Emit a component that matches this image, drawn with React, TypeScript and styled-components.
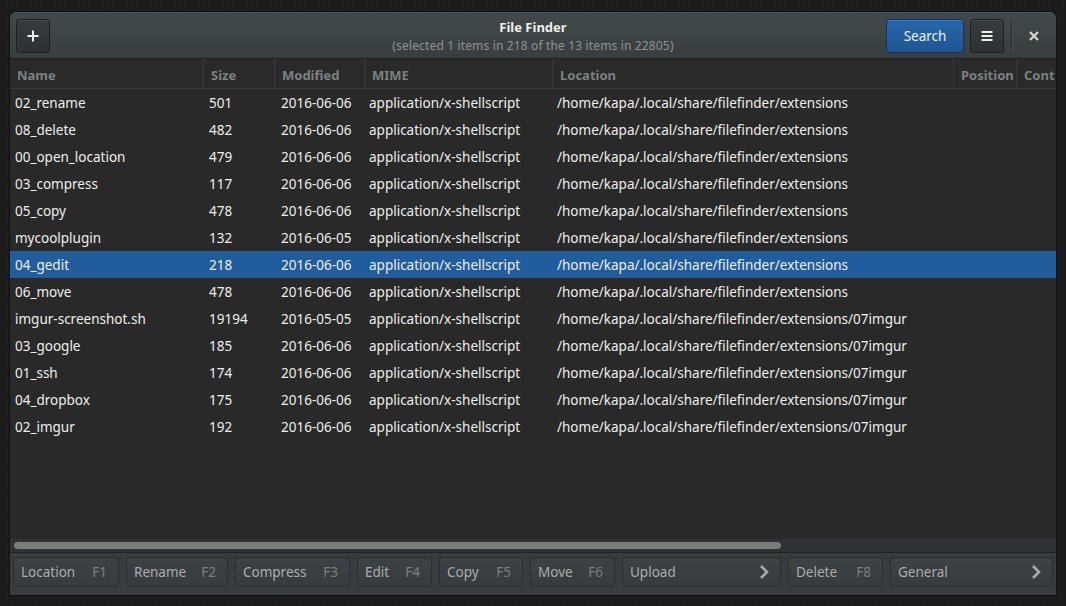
import React from "react";
import styled, { createGlobalStyle } from "styled-components";

const Global = createGlobalStyle`
  html, body { margin: 0; padding: 0; }
  body {
    width: 1066px; height: 606px; overflow: hidden;
    background-color: #1b1b1b;
    background-image: radial-gradient(#242424 1px, transparent 1px);
    background-size: 3px 3px;
    font-family: "Noto Sans", "DejaVu Sans", sans-serif;
  }
`;

const Window = styled.div`
  margin: 12px 0 0 10px;
  width: 1046px;
  height: 583px;
  display: flex;
  flex-direction: column;
  background: #292929;
  border-radius: 6px 6px 0 0;
  overflow: hidden;
  box-shadow: 0 0 0 1px #111;
`;

const HeaderBar = styled.div`
  flex: none;
  display: grid;
  grid-template-columns: 1fr auto 1fr;
  align-items: center;
  padding: 0 6px;
  background: linear-gradient(#41494b, #383e40);
  border-bottom: 1px solid #1e2122;
  border-top: 1px solid #4c5456;
  box-sizing: border-box;
  height: 47px;
`;

const Side = styled.div<{ $end?: boolean }>`
  display: flex;
  align-items: center;
  justify-content: ${(p) => (p.$end ? "flex-end" : "flex-start")};
  gap: 6px;
`;

const ToolButton = styled.button<{ $w: number; $blue?: boolean }>`
  width: ${(p) => p.$w}px;
  height: 34px;
  box-sizing: border-box;
  display: flex;
  align-items: center;
  justify-content: center;
  border-radius: 3px;
  border: 1px solid ${(p) => (p.$blue ? "#12335a" : "#1d2021")};
  background: ${(p) =>
    p.$blue ? "linear-gradient(#2767ad, #1f5591)" : "linear-gradient(#363b3d, #2d3133)"};
  box-shadow: inset 0 1px 0 ${(p) => (p.$blue ? "#3a78bb" : "#414648")};
  color: #eeeeec;
  font: 13.5px "Noto Sans", sans-serif;
  padding: 0;
  flex: none;
`;

const TitleBox = styled.div`
  display: flex;
  flex-direction: column;
  align-items: center;
  justify-content: center;
  padding-top: 1px;
`;

const Title = styled.div`
  font-weight: bold;
  font-size: 13px;
  color: #eeeeec;
  line-height: 17px;
`;

const Subtitle = styled.div`
  font-size: 12px;
  letter-spacing: 0.15px;
  color: #8d9394;
  line-height: 15px;
  margin-top: 2px;
`;

const Sep = styled.div`
  width: 1px;
  height: 34px;
  flex: none;
  background: #2a2f30;
  box-shadow: 1px 0 0 #464d4f;
  margin: 0 0 0 1px;
`;

const CloseBtn = styled.div`
  width: 32px;
  height: 34px;
  flex: none;
  display: flex;
  align-items: center;
  justify-content: center;
`;

const TableArea = styled.div`
  flex: 1;
  display: flex;
  flex-direction: column;
  background: #292929;
  overflow: hidden;
`;

const HeaderRow = styled.div`
  display: flex;
  height: 30px;
  flex: none;
  box-sizing: border-box;
  border-bottom: 1px solid #3a3c3c;
  background: #2a2a2a;
`;

const HeadCell = styled.div<{ $w: number; $last?: boolean }>`
  width: ${(p) => p.$w}px;
  flex: none;
  box-sizing: border-box;
  padding: 2px 0 0 7px;
  display: flex;
  align-items: center;
  font-weight: bold;
  font-size: 13px;
  color: #7d8182;
  border-right: ${(p) => (p.$last ? "none" : "1px solid #3a3c3c")};
  white-space: nowrap;
  overflow: hidden;
`;

const Row = styled.div<{ $sel?: boolean }>`
  display: flex;
  height: 27px;
  flex: none;
  background: ${(p) => (p.$sel ? "#215d9c" : "transparent")};
  color: #eeeeec;
  font-size: 13.5px;
`;

const Cell = styled.div<{ $w: number; $pl?: number }>`
  width: ${(p) => p.$w}px;
  flex: none;
  box-sizing: border-box;
  padding-left: ${(p) => p.$pl ?? 5}px;
  display: flex;
  align-items: center;
  white-space: nowrap;
  overflow: hidden;
`;

const Track = styled.div`
  height: 13px;
  flex: none;
  background: #2f3335;
  border-bottom: 1px solid #1f2223;
  display: flex;
  align-items: center;
  padding-left: 4px;
`;

const Slider = styled.div`
  width: 767px;
  height: 7px;
  border-radius: 4px;
  background: #787d79;
`;

const BottomBar = styled.div`
  height: 42px;
  flex: none;
  background: #383c3e;
  display: flex;
  align-items: flex-start;
  padding: 4px 3px 0 3px;
  gap: 7px;
  box-sizing: border-box;
`;

const ActionBtn = styled.div<{ $w: number }>`
  width: ${(p) => p.$w}px;
  height: 30px;
  flex: none;
  box-sizing: border-box;
  border: 1px solid #2a2e30;
  border-radius: 3px;
  background: linear-gradient(#3d4244, #373b3d);
  display: flex;
  align-items: center;
  justify-content: space-between;
  padding: 0 11px 0 7px;
  font-size: 13.5px;
  color: #a9adae;
`;

const Key = styled.span`
  color: #7a7f80;
`;

const cols = [194, 71, 90, 188, 401, 63, 60];

const rows: [string, string, string, string][] = [
  ["02_rename", "501", "2016-06-06", ""],
  ["08_delete", "482", "2016-06-06", ""],
  ["00_open_location", "479", "2016-06-06", ""],
  ["03_compress", "117", "2016-06-06", ""],
  ["05_copy", "478", "2016-06-06", ""],
  ["mycoolplugin", "132", "2016-06-05", ""],
  ["04_gedit", "218", "2016-06-06", ""],
  ["06_move", "478", "2016-06-06", ""],
  ["imgur-screenshot.sh", "19194", "2016-05-05", "/07imgur"],
  ["03_google", "185", "2016-06-06", "/07imgur"],
  ["01_ssh", "174", "2016-06-06", "/07imgur"],
  ["04_dropbox", "175", "2016-06-06", "/07imgur"],
  ["02_imgur", "192", "2016-06-06", "/07imgur"],
];

const Chevron = () => (
  <svg width="10" height="16" viewBox="0 0 10 16">
    <path d="M2 2 L8 8 L2 14" fill="none" stroke="#a9adae" strokeWidth="2.6" />
  </svg>
);

const actions: { label: string; key?: string; w: number }[] = [
  { label: "Location", key: "F1", w: 106 },
  { label: "Rename", key: "F2", w: 102 },
  { label: "Compress", key: "F3", w: 115 },
  { label: "Edit", key: "F4", w: 75 },
  { label: "Copy", key: "F5", w: 84 },
  { label: "Move", key: "F6", w: 85 },
  { label: "Upload", w: 159 },
  { label: "Delete", key: "F8", w: 95 },
  { label: "General", w: 163 },
];

export default function App() {
  return (
    <>
      <Global />
      <Window>
        <HeaderBar>
          <Side>
            <ToolButton $w={34}>
              <svg width="12" height="12" viewBox="0 0 12 12">
                <path d="M6 0.5 V11.5 M0.5 6 H11.5" stroke="#eeeeec" strokeWidth="2" />
              </svg>
            </ToolButton>
          </Side>
          <TitleBox>
            <Title>File Finder</Title>
            <Subtitle>(selected 1 items in 218 of the 13 items in 22805)</Subtitle>
          </TitleBox>
          <Side $end>
            <ToolButton $w={78} $blue>Search</ToolButton>
            <ToolButton $w={34}>
              <svg width="12" height="12" viewBox="0 0 12 12">
                <path d="M0.5 2 H11.5 M0.5 6 H11.5 M0.5 10 H11.5" stroke="#eeeeec" strokeWidth="2" />
              </svg>
            </ToolButton>
            <Sep />
            <CloseBtn>
              <svg width="10" height="10" viewBox="0 0 10 10">
                <path d="M1 1 L9 9 M9 1 L1 9" stroke="#d8d8d6" strokeWidth="2.2" />
              </svg>
            </CloseBtn>
          </Side>
        </HeaderBar>
        <TableArea>
          <HeaderRow>
            {["Name", "Size", "Modified", "MIME", "Location", "Position", "Cont"].map((h, i) => (
              <HeadCell key={h} $w={cols[i]} $last={i === 6}>
                {h}
              </HeadCell>
            ))}
          </HeaderRow>
          {rows.map((r) => (
            <Row key={r[0]} $sel={r[0] === "04_gedit"}>
              <Cell $w={cols[0]}>{r[0]}</Cell>
              <Cell $w={cols[1]}>{r[1]}</Cell>
              <Cell $w={cols[2]} $pl={6}>{r[2]}</Cell>
              <Cell $w={cols[3]} $pl={4}>application/x-shellscript</Cell>
              <Cell $w={cols[4]} $pl={4}>/home/kapa/.local/share/filefinder/extensions{r[3]}</Cell>
              <Cell $w={cols[5]} />
              <Cell $w={cols[6]} />
            </Row>
          ))}
        </TableArea>
        <Track>
          <Slider />
        </Track>
        <BottomBar>
          {actions.map((a) => (
            <ActionBtn key={a.label} $w={a.w}>
              <span>{a.label}</span>
              {a.key ? <Key>{a.key}</Key> : <Chevron />}
            </ActionBtn>
          ))}
        </BottomBar>
      </Window>
    </>
  );
}
